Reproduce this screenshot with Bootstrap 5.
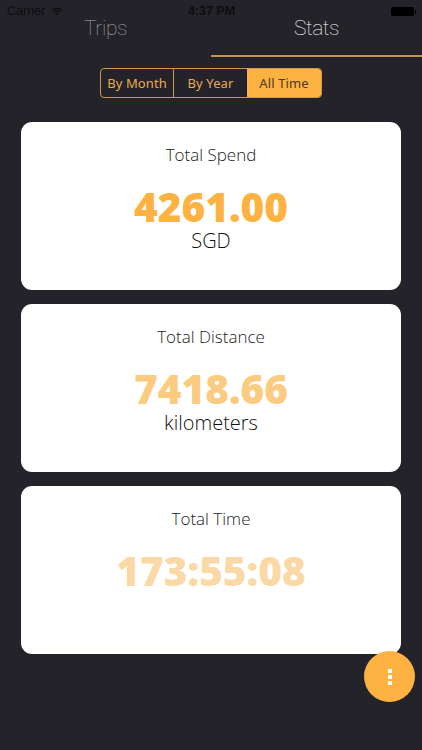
<!DOCTYPE html>
<html lang="en">
<head>
<meta charset="utf-8">
<title>Stats</title>
<link href="https://cdn.jsdelivr.net/npm/bootstrap@5.3.0/dist/css/bootstrap.min.css" rel="stylesheet">
<style>
html,body{height:100%}
body{background:#242329;font-family:"Open Sans","Liberation Sans",sans-serif;overflow:hidden}
.phone{width:422px;height:750px;position:relative;overflow:hidden}
.statusbar{height:17px;padding:3px 6px 0 7px;color:#0d0d10;font-family:"Liberation Sans",sans-serif;font-size:12.5px;line-height:16px}
.status-side{width:100px}
.gap-wifi{gap:6px}
.batt{width:23px;height:9px;background:#000;border-radius:2px}
.batt-tip{width:1.5px;height:4px;background:#000;margin-left:1px}
.tabs{height:40px}
.tabitem{width:50%;text-align:center;font-family:"Roboto","Liberation Sans",sans-serif;font-weight:100;font-size:21px;line-height:22px;color:#a9a8ab;letter-spacing:-.4px}
.tabitem.on{color:#fff;border-bottom:2px solid #c4944c}
.segwrap{margin-top:11px}
.seg{border:1px solid #c9994f;border-radius:4px;height:30px;width:222px;overflow:hidden}
.segitem{text-align:center;font-size:13px;line-height:28px;color:#e9ab4e;font-family:"Noto Sans","Open Sans",sans-serif;letter-spacing:.1px}
.seg1{width:72px}.seg2{width:74px}.seg3{width:74px}
.segitem+.segitem{border-left:1px solid #c9994f}
.segitem.on{background:#fdb241;color:#4a3a22;border-left:0}
.cards{padding:24px 21px 0;gap:14px}
.statcard{height:168px;background:#fff;border-radius:11px;border:0;text-align:center;padding-top:21px}
.stat-title{font-size:17px;font-weight:300;line-height:24px;color:#222}
.stat-num{font-size:40.5px;font-weight:800;line-height:46px;margin-top:17px;color:#fdb241}
.n2{color:#fbcb80}.n3{color:#fbd9a6}
.stat-unit{font-size:20px;font-weight:300;line-height:22px;color:#111}
.fab{position:absolute;left:364px;top:651px;width:51px;height:51px;border-radius:50%;background:#fdb241;gap:2px}
.fab i{display:block;width:4px;height:4px;background:#fff}
</style>
</head>
<body>
<div class="phone">
  <div class="statusbar d-flex justify-content-between align-items-start">
    <div class="status-side d-flex align-items-center gap-wifi">
      <span>Carrier</span>
      <svg width="12" height="9" viewBox="0 0 13 10" aria-hidden="true"><path d="M.5 3.2a8.6 8.6 0 0 1 12 0l-1 1a7.2 7.2 0 0 0-10 0zM2.6 5.3a5.6 5.6 0 0 1 7.8 0l-1 1a4.2 4.2 0 0 0-5.8 0zM4.7 7.4a2.6 2.6 0 0 1 3.6 0L6.5 9.3z" fill="#0d0d10"/></svg>
    </div>
    <div class="fw-bold">4:37 PM</div>
    <div class="status-side d-flex justify-content-end align-items-center pt-1"><div class="batt"></div><div class="batt-tip"></div></div>
  </div>
  <div class="tabs d-flex">
    <div class="tabitem">Trips</div>
    <div class="tabitem on">Stats</div>
  </div>
  <div class="segwrap d-flex justify-content-center">
    <div class="seg d-flex">
      <div class="segitem seg1">By Month</div>
      <div class="segitem seg2">By Year</div>
      <div class="segitem seg3 on">All Time</div>
    </div>
  </div>
  <div class="cards d-flex flex-column">
    <div class="card statcard">
      <div class="stat-title">Total Spend</div>
      <div class="stat-num">4261.00</div>
      <div class="stat-unit">SGD</div>
    </div>
    <div class="card statcard">
      <div class="stat-title">Total Distance</div>
      <div class="stat-num n2">7418.66</div>
      <div class="stat-unit">kilometers</div>
    </div>
    <div class="card statcard">
      <div class="stat-title">Total Time</div>
      <div class="stat-num n3">173:55:08</div>
    </div>
  </div>
  <div class="fab d-flex flex-column align-items-center justify-content-center"><i></i><i></i><i></i></div>
</div>
<script src="https://cdn.jsdelivr.net/npm/bootstrap@5.3.0/dist/js/bootstrap.bundle.min.js"></script>
</body>
</html>
